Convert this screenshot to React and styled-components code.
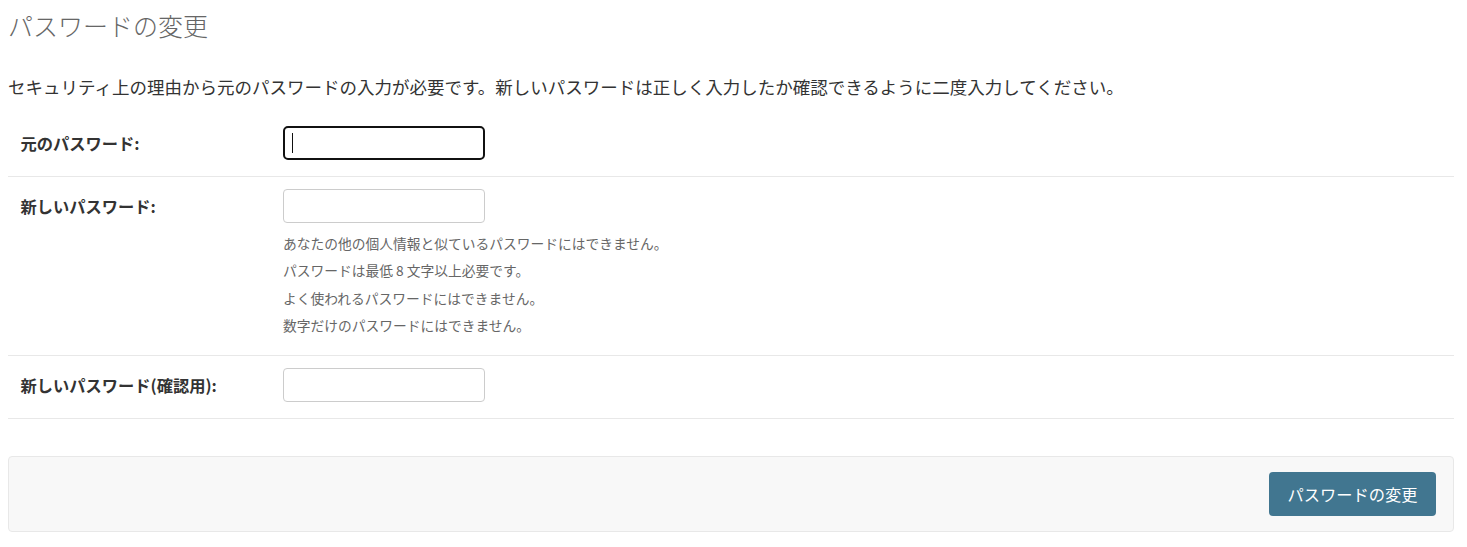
import React from "react";
import styled, { createGlobalStyle, css } from "styled-components";

const Global = createGlobalStyle`
  body {
    margin: 8px;
    background: #fff;
    font-family: "Noto Sans CJK JP", "Noto Sans", "Liberation Sans", sans-serif;
    color: #333;
  }
  * { box-sizing: border-box; }
`;

const Page = styled.div`
  padding-right: 5px;
`;

const Title = styled.h1`
  margin: 2px 0 34px;
  font-size: 25px;
  line-height: 30px;
  font-weight: 300;
  color: #666;
`;

const Intro = styled.p`
  margin: 0 0 15px;
  font-size: 17.5px;
  line-height: 25px;
  color: #333;
`;

const Row = styled.div`
  display: flex;
  align-items: flex-start;
  padding: 12px 12.5px 16px;
  border-bottom: 1px solid #e8e8e8;
`;

const Label = styled.label`
  flex: 0 0 262.5px;
  font-size: 16.25px;
  font-weight: 700;
  line-height: 34px;
  color: #333;
`;

const Field = styled.div`
  display: flex;
  flex-direction: column;
`;

const InputWrap = styled.div`
  position: relative;
  width: 202px;
  height: 34px;
`;

const Input = styled.input`
  display: block;
  width: 202px;
  height: 34px;
  margin: 0;
  padding: 5px 8px;
  font: inherit;
  font-size: 16px;
  background: #fff;
  border: 1px solid #ccc;
  border-radius: 4px;
  outline: none;
  ${(p) =>
    p.$focused &&
    css`
      border: 2px solid #111;
      border-radius: 5px;
    `}
`;

const Caret = styled.span`
  position: absolute;
  left: 9px;
  top: 7px;
  width: 1px;
  height: 20px;
  background: #111;
`;

const HelpList = styled.div`
  margin-top: 7px;
  font-size: 13.75px;
  line-height: 27.25px;
  color: #666;
`;

const SubmitRow = styled.div`
  display: flex;
  justify-content: flex-end;
  margin-top: 37px;
  padding: 15px 17px;
  background: #f8f8f8;
  border: 1px solid #e8e8e8;
  border-radius: 4px;
`;

const Button = styled.button`
  height: 44px;
  padding: 0 18.5px;
  font: inherit;
  font-size: 16.25px;
  color: #fff;
  background: #417690;
  border: none;
  border-radius: 4px;
  cursor: pointer;
`;

const helps = [
  "あなたの他の個人情報と似ているパスワードにはできません。",
  "パスワードは最低 8 文字以上必要です。",
  "よく使われるパスワードにはできません。",
  "数字だけのパスワードにはできません。",
];

export default function App() {
  return (
    <Page>
      <Global />
      <Title>パスワードの変更</Title>
      <Intro>
        セキュリティ上の理由から元のパスワードの入力が必要です。新しいパスワードは正しく入力したか確認できるように二度入力してください。
      </Intro>
      <Row>
        <Label>元のパスワード:</Label>
        <Field>
          <InputWrap>
            <Input type="password" $focused readOnly />
            <Caret />
          </InputWrap>
        </Field>
      </Row>
      <Row>
        <Label>新しいパスワード:</Label>
        <Field>
          <InputWrap>
            <Input type="password" readOnly />
          </InputWrap>
          <HelpList>
            {helps.map((h) => (
              <div key={h}>{h}</div>
            ))}
          </HelpList>
        </Field>
      </Row>
      <Row>
        <Label>新しいパスワード(確認用):</Label>
        <Field>
          <InputWrap>
            <Input type="password" readOnly />
          </InputWrap>
        </Field>
      </Row>
      <SubmitRow>
        <Button type="button">パスワードの変更</Button>
      </SubmitRow>
    </Page>
  );
}
